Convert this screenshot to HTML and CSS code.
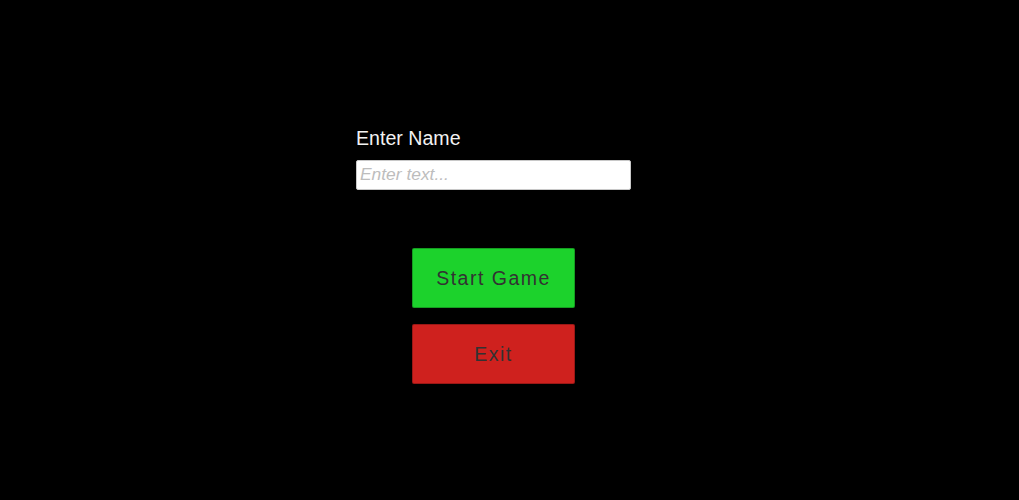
FILE: index.html
```html
<!DOCTYPE html>
<html>
<head>
<meta charset="utf-8">
<link rel="stylesheet" href="styles.css">
</head>
<body>
<main class="menu">
  <label class="label" for="name">Enter Name</label>
  <input class="name-input" id="name" type="text" placeholder="Enter text...">
  <div class="buttons">
    <button class="btn btn-start">Start Game</button>
    <button class="btn btn-exit">Exit</button>
  </div>
</main>
</body>
</html>
```
FILE: styles.css
```css
html, body {
  margin: 0;
  padding: 0;
  background: #000;
  height: 100%;
}
body {
  font-family: "Liberation Sans", Arial, sans-serif;
}
.menu {
  width: 275px;
  margin-left: 356px;
  padding-top: 126px;
  display: flex;
  flex-direction: column;
}
.label {
  color: #f2f2f2;
  font-size: 19.6px;
  line-height: 24px;
  height: 24px;
  margin-bottom: 10px;
}
.name-input {
  box-sizing: border-box;
  width: 275px;
  height: 30px;
  border: 1px solid #c8c8c8;
  border-radius: 2px;
  background: #fff;
  padding: 0 3px 2px;
  font-family: "Liberation Sans", Arial, sans-serif;
  font-size: 17.4px;
  outline: none;
}
.name-input::placeholder {
  color: #bdbdbd;
  font-style: italic;
}
.buttons {
  margin-top: 58px;
  display: flex;
  flex-direction: column;
  align-items: center;
  gap: 16px;
}
.btn {
  box-sizing: border-box;
  width: 163px;
  height: 60px;
  border: 1px solid rgba(0, 0, 0, 0.25);
  border-radius: 2px;
  font-family: "Liberation Sans", Arial, sans-serif;
  font-size: 19.5px;
  letter-spacing: 1.5px;
  color: #323232;
  padding: 0;
}
.btn-start {
  background: #1cd22c;
}
.btn-exit {
  background: #cf211e;
}
```
